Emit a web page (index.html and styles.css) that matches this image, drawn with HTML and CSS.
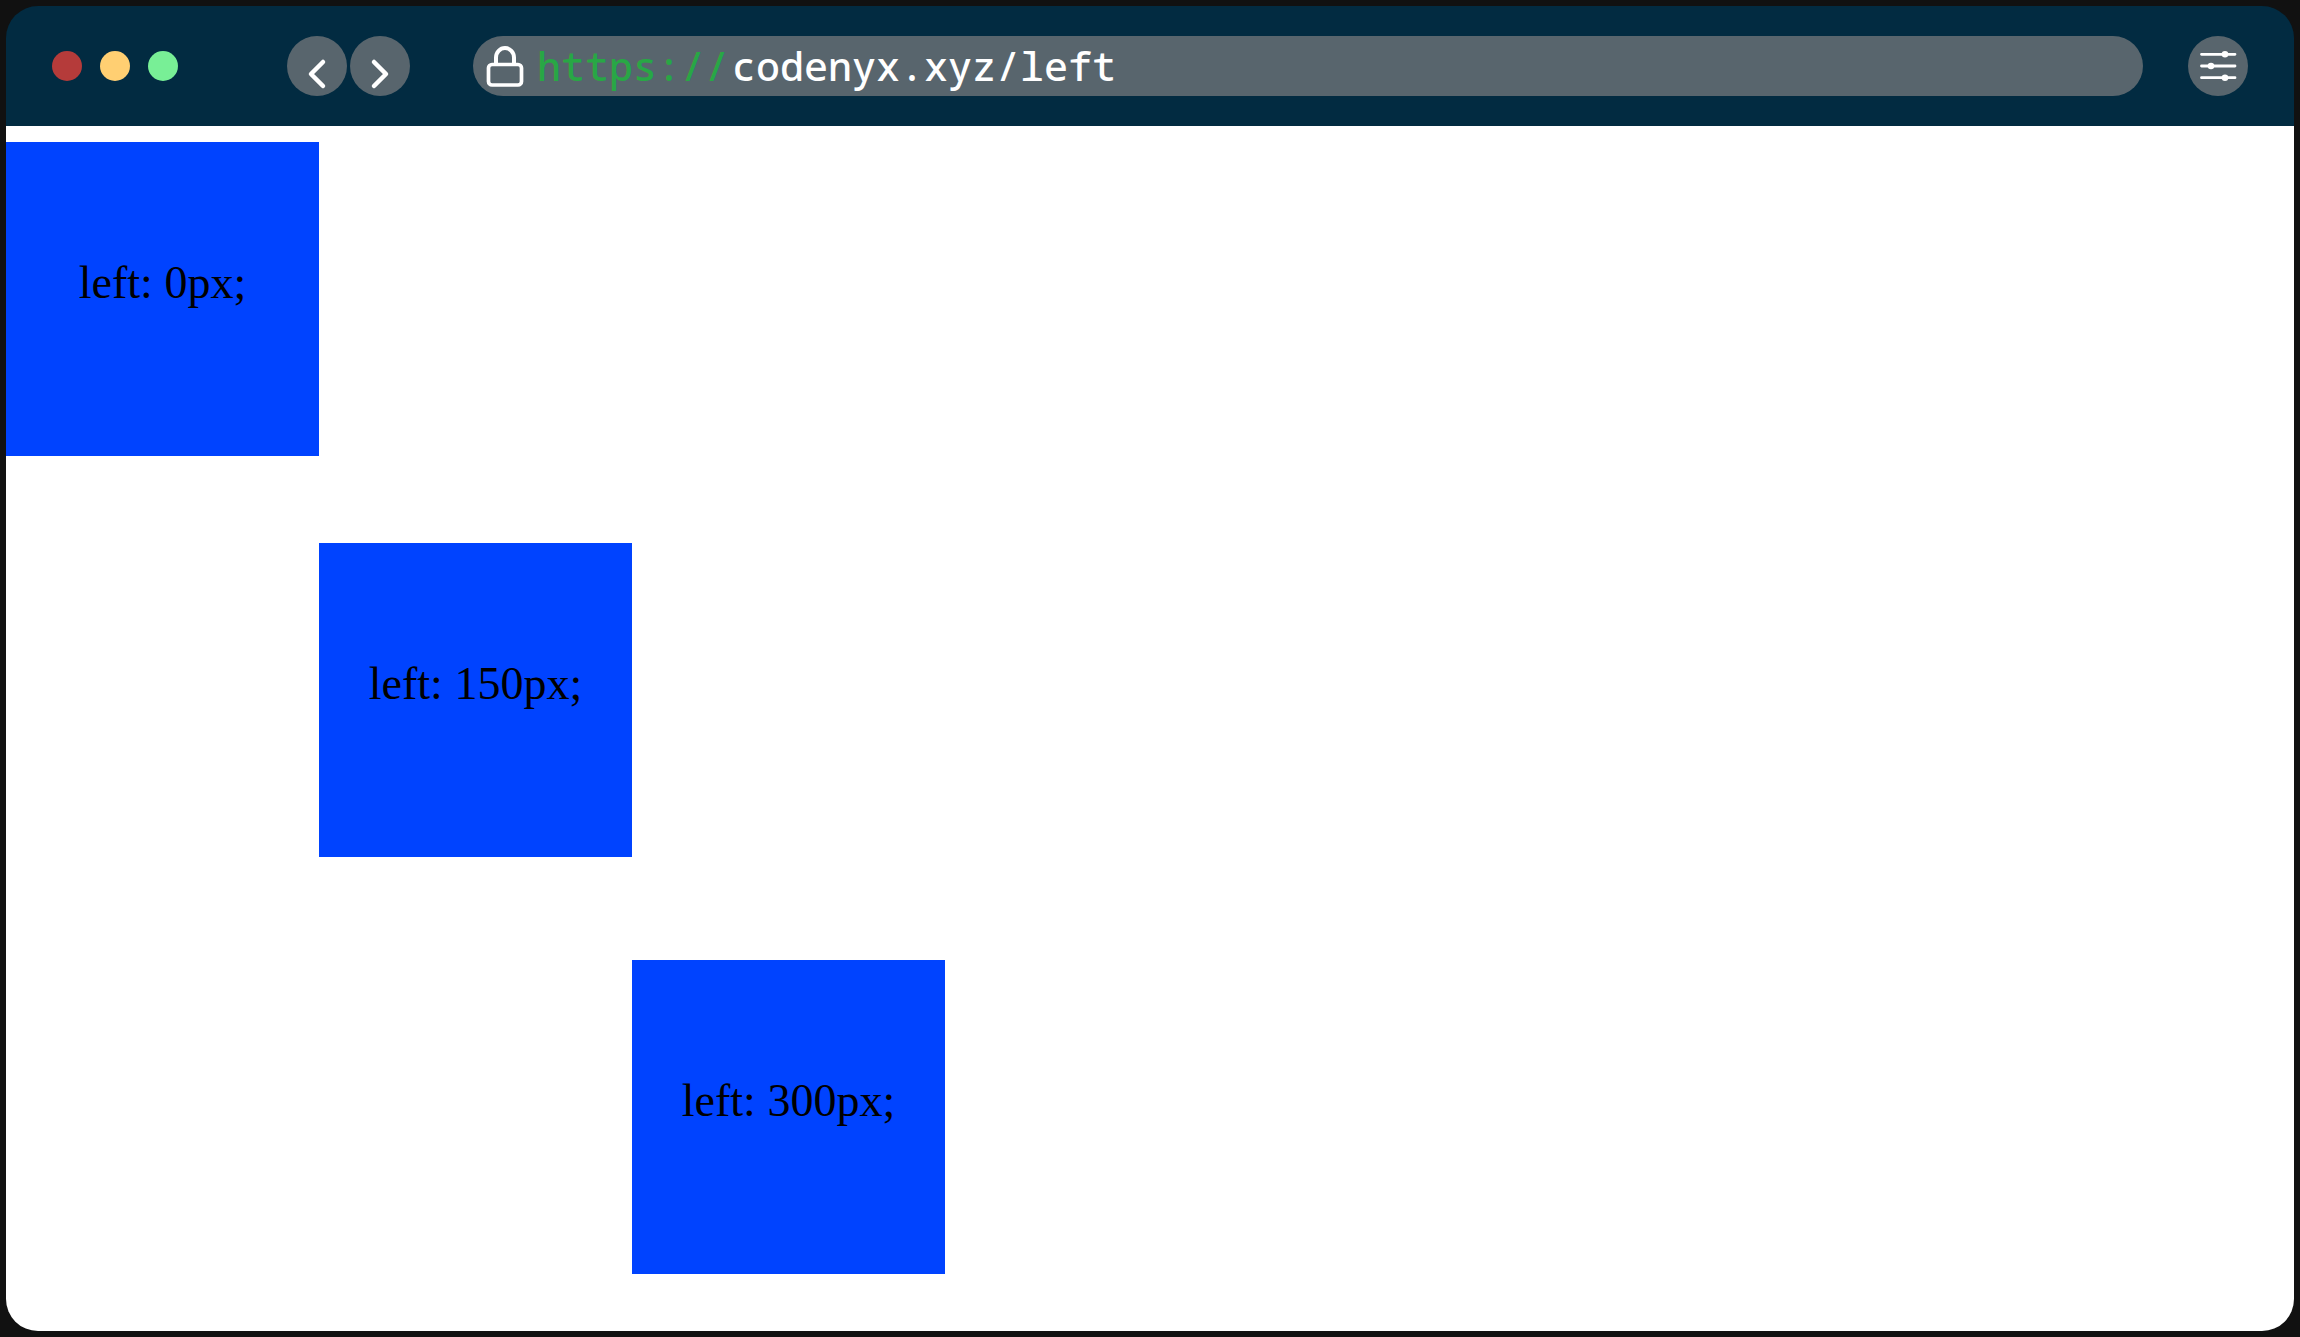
FILE: index.html
```html
<!DOCTYPE html>
<html lang="en">
<head>
<meta charset="utf-8">
<meta name="viewport" content="width=device-width, initial-scale=1">
<title>codenyx.xyz/left</title>
<link rel="stylesheet" href="styles.css">
</head>
<body>
<div class="window">
  <header class="toolbar">
    <div class="lights">
      <span class="light light-red"></span>
      <span class="light light-yellow"></span>
      <span class="light light-green"></span>
    </div>
    <nav class="history">
      <button class="round" type="button" aria-label="Back">
        <svg viewBox="0 0 60 60"><path d="M36 26 24 38 36 50" stroke-width="4.5"/></svg>
      </button>
      <button class="round" type="button" aria-label="Forward">
        <svg viewBox="0 0 60 60"><path d="M24 26 36 38 24 50" stroke-width="4.5"/></svg>
      </button>
    </nav>
    <div class="address">
      <svg class="lock" viewBox="0 0 40 44"><path d="M11 19V13.500a9 9.500 0 0 1 18 0V19" stroke-width="4"/><rect x="3.500" y="20.500" width="33" height="20.500" rx="3.500" stroke-width="3.700"/></svg>
      <label class="scheme" for="url">https://</label>
      <input class="url" id="url" type="text" value="codenyx.xyz/left" spellcheck="false">
    </div>
    <button class="round" type="button" aria-label="Settings">
      <svg viewBox="0 0 60 60"><path d="M13.500 18.300H47M13.500 30H47M13.500 41.700H47" stroke-width="2.800"/><g class="knobs"><circle cx="37" cy="18.300" r="3.300"/><circle cx="23" cy="30" r="3.300"/><circle cx="37" cy="41.700" r="3.300"/></g></svg>
    </button>
  </header>
  <main class="page">
    <div class="box box-first">left: 0px;</div>
    <div class="box box-second">left: 150px;</div>
    <div class="box box-third">left: 300px;</div>
  </main>
</div>
</body>
</html>
```
FILE: styles.css
```css
* {
  box-sizing: border-box;
}

body {
  margin: 0;
  padding: 6px;
  min-height: 100vh;
  display: flex;
  background: #111;
}

.window {
  flex: 1;
  min-width: 0;
  display: flex;
  flex-direction: column;
}

.toolbar {
  display: flex;
  align-items: center;
  padding: 30px 46px;
  border-radius: 32px 32px 0 0;
  background: #022b41;
}

.lights {
  display: flex;
  gap: 18px;
  margin-right: 109px;
}

.light {
  width: 30px;
  height: 30px;
  border-radius: 50%;
}

.light-red { background: #b53b3a; }
.light-yellow { background: #ffcf72; }
.light-green { background: #78ef96; }

.history {
  display: flex;
  gap: 3px;
  margin-right: 63px;
}

.round {
  flex: none;
  width: 60px;
  height: 60px;
  padding: 0;
  border: 0;
  border-radius: 50%;
  background: #58656d;
}

svg {
  display: block;
  fill: none;
  stroke: #fff;
  stroke-linecap: round;
  stroke-linejoin: round;
}

.knobs {
  fill: #fff;
  stroke: none;
}

.address {
  flex: 1;
  min-width: 0;
  height: 60px;
  display: flex;
  align-items: center;
  margin-right: 45px;
  padding: 0 30px 0 12px;
  border-radius: 30px;
  background: #58656d;
  font: 500 40px/60px "Noto Sans Mono", "DejaVu Sans Mono", monospace;
}

.lock {
  flex: none;
  width: 40px;
  height: 44px;
  margin-right: 12px;
}

.scheme {
  margin-right: 3px;
  color: #28a745;
}

.url {
  flex: 1;
  min-width: 0;
  height: 60px;
  padding: 0;
  border: 0;
  outline: 0;
  background: transparent;
  color: #fff;
  font: inherit;
}

.page {
  flex: 1;
  display: grid;
  grid-template-columns: repeat(3, 313px);
  align-content: start;
  padding: 16px 0 32px;
  border-radius: 0 0 32px 32px;
  background: #fff;
}

.box {
  height: 314px;
  display: flex;
  align-items: center;
  justify-content: center;
  padding-bottom: 34px;
  background: #0043ff;
  color: #000;
  font: 46px "Liberation Serif", serif;
}

.box-first {
  grid-area: 1 / 1;
}

.box-second {
  grid-area: 2 / 2;
  margin-top: 87px;
}

.box-third {
  grid-area: 3 / 3;
  margin-top: 103px;
}
```
